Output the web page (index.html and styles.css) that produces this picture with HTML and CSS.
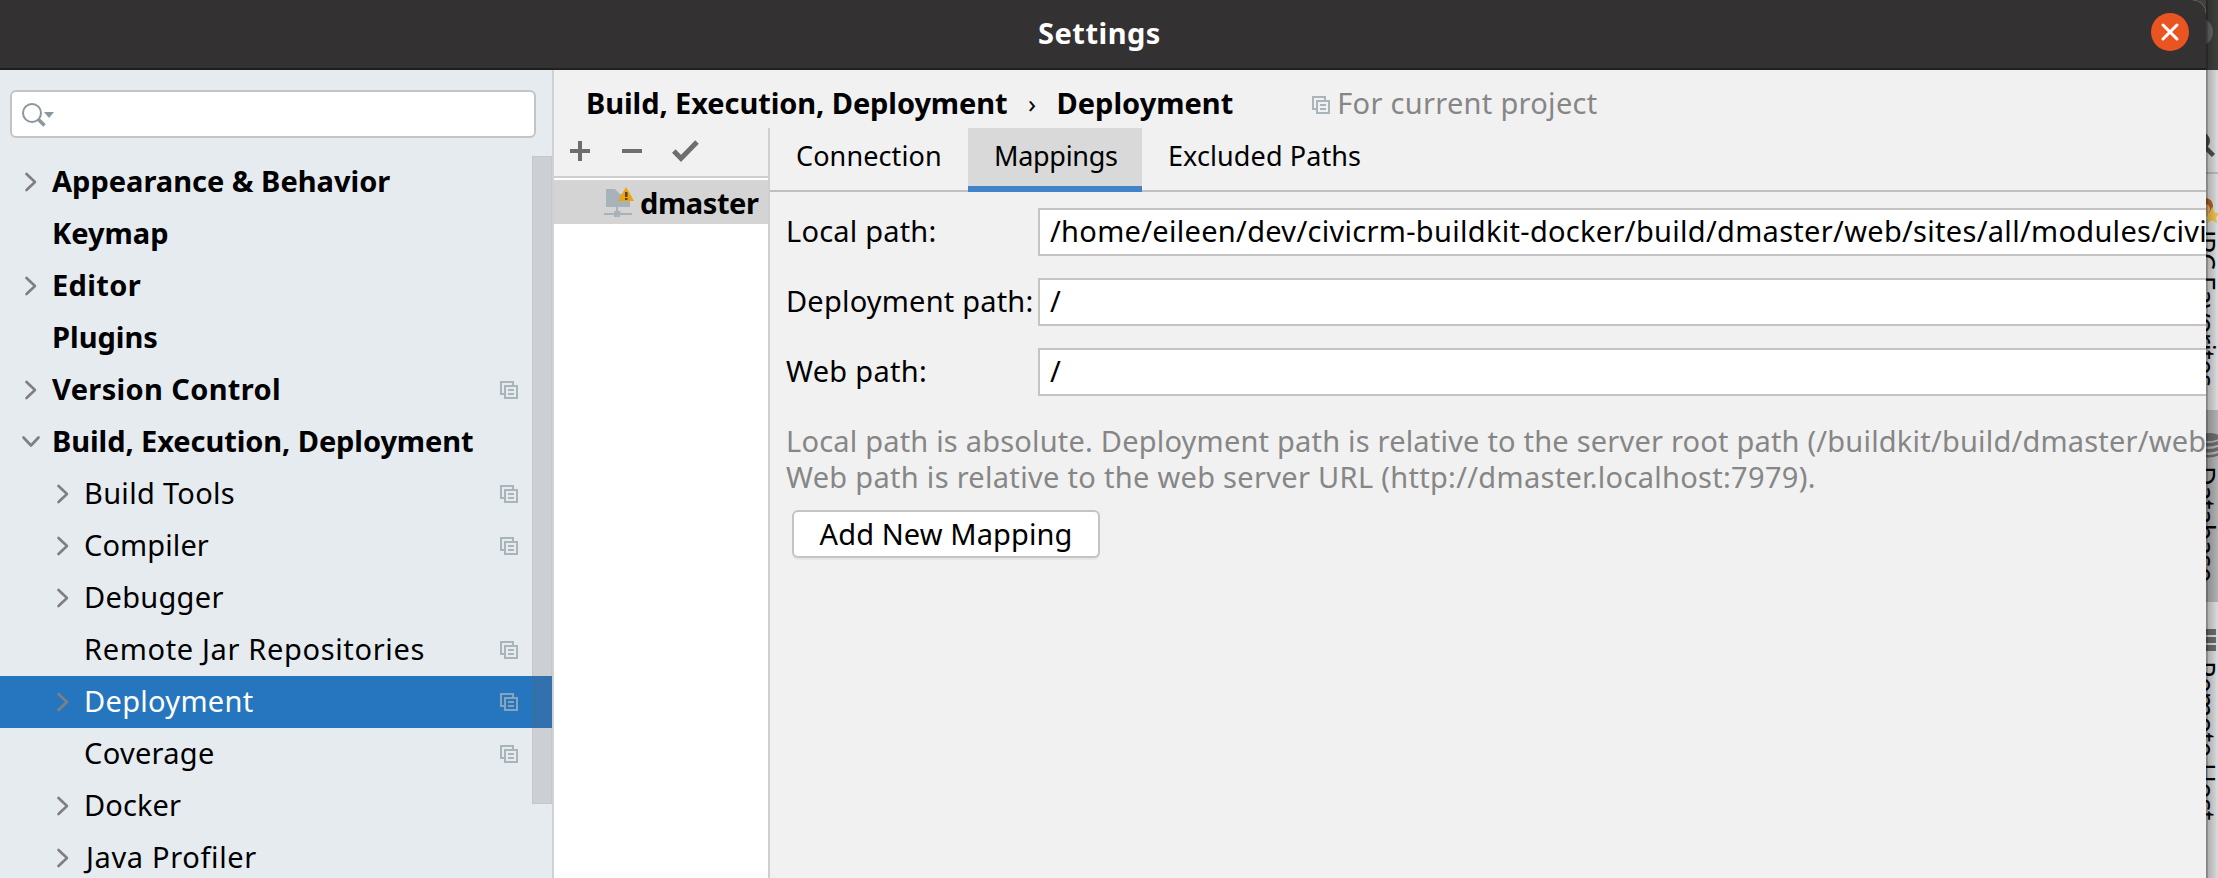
FILE: index.html
```html
<!DOCTYPE html>
<html lang="en">
<head>
<meta charset="utf-8">
<title>Settings</title>
<link rel="stylesheet" href="styles.css">
</head>
<body>
<svg class="defs" aria-hidden="true">
  <symbol id="right" viewBox="0 0 18 20"><path d="M4.500 2l8.500 8-8.500 8" fill="none" stroke="#7f7f7f" stroke-width="2.600" stroke-linecap="round" stroke-linejoin="round"/></symbol>
  <symbol id="down" viewBox="0 0 18 20"><path d="M1.500 5.500L9 13.500l7.500-8" fill="none" stroke="#7f7f7f" stroke-width="2.600" stroke-linecap="round" stroke-linejoin="round"/></symbol>
  <symbol id="copy" viewBox="0 0 18 18"><path d="M4 13H1V1h12v3M5 5h12v12H5zM8 9h6M8 13h6" fill="none" stroke="#a9b4bb" stroke-width="2"/></symbol>
</svg>
<div class="desktop">
  <aside class="strip">
    <div class="strip-top"><i class="ghost"></i></div>
    <div class="strip-find"><svg width="12" height="102" viewBox="0 0 12 102"><circle cx="-5" cy="71" r="7" fill="none" stroke="#4e4e4e" stroke-width="4"/><path d="M-2 76L7.500 85.500" stroke="#4e4e4e" stroke-width="4.500"/></svg></div>
    <div class="tool favorites"><svg width="12" height="28" viewBox="0 0 12 28"><circle cx="-1" cy="10" r="8" fill="#b5651d"/><circle cx="-1" cy="13" r="5" fill="#e9b98a"/><path d="M6 11l2.400 5.500 6 .7-4.500 4 1.200 6-5.100-3-5.100 3 1.200-6-4.500-4 6-.7z" fill="#f2c44d"/></svg><span>JPC Favorites</span></div>
    <div class="tool database"><svg width="12" height="28" viewBox="0 0 12 28"><g fill="#6e6e6e"><ellipse cx="3" cy="5" rx="11" ry="4"/><path d="M-8 8q11 6 22 0v4q-11 5-22 0zM-8 14q11 6 22 0v4q-11 5-22 0zM-8 20q11 6 22 0v3q-11 5-22 0z"/></g></svg><span>Database</span></div>
    <div class="tool remote"><svg width="12" height="24" viewBox="0 0 12 24"><path d="M0 0h10v6H0zM0 8h10v6H0zM0 16h10v6H0z" fill="#6e6e6e"/></svg><span>Remote Host</span></div>
  </aside>
  <main class="dialog">
    <header class="titlebar">
      <h1>Settings</h1>
      <button class="close" aria-label="Close"><svg width="38" height="38" viewBox="0 0 38 38"><path d="M12 12l14 14M26 12L12 26" stroke="#fff" stroke-width="3" stroke-linecap="round"/></svg></button>
    </header>
    <div class="body">
      <nav class="sidebar">
        <div class="search"><svg width="34" height="26" viewBox="0 0 34 26"><circle cx="10" cy="11" r="9" fill="none" stroke="#8a979f" stroke-width="2"/><path d="M16.500 17.500l6 6" stroke="#8a979f" stroke-width="3.500"/><path d="M22 10h10l-5 6z" fill="#8a979f"/></svg></div>
        <div class="tree">
          <ul>
            <li class="top"><svg class="arrow"><use href="#right"/></svg><span>Appearance &amp; Behavior</span></li>
            <li class="top"><i class="arrow"></i><span>Keymap</span></li>
            <li class="top"><svg class="arrow"><use href="#right"/></svg><span class="w3">Editor</span></li>
            <li class="top"><i class="arrow"></i><span>Plugins</span></li>
            <li class="top"><svg class="arrow"><use href="#right"/></svg><span class="w3">Version Control</span><svg class="copy"><use href="#copy"/></svg></li>
            <li class="top"><svg class="arrow"><use href="#down"/></svg><span class="n1">Build, Execution, Deployment</span></li>
            <li><svg class="arrow"><use href="#right"/></svg><span>Build Tools</span><svg class="copy"><use href="#copy"/></svg></li>
            <li><svg class="arrow"><use href="#right"/></svg><span class="w1">Compiler</span><svg class="copy"><use href="#copy"/></svg></li>
            <li><svg class="arrow"><use href="#right"/></svg><span>Debugger</span></li>
            <li><i class="arrow"></i><span class="w6">Remote Jar Repositories</span><svg class="copy"><use href="#copy"/></svg></li>
            <li class="selected"><svg class="arrow"><use href="#right"/></svg><span>Deployment</span><svg class="copy"><use href="#copy"/></svg></li>
            <li><i class="arrow"></i><span>Coverage</span><svg class="copy"><use href="#copy"/></svg></li>
            <li><svg class="arrow"><use href="#right"/></svg><span class="w1">Docker</span></li>
            <li><svg class="arrow"><use href="#right"/></svg><span class="w6 java">Java Profiler</span></li>
          </ul>
          <div class="scrollbar"></div>
        </div>
      </nav>
      <section class="page">
        <div class="crumbs"><b class="n1">Build, Execution, Deployment</b><span class="sep">›</span><b>Deployment</b><svg class="copy"><use href="#copy"/></svg><span class="scope">For current project</span></div>
        <div class="columns">
          <div class="servers">
            <div class="toolbar">
              <svg width="20" height="20" viewBox="0 0 20 20"><path d="M0 10h20M10 0v20" stroke="#6e6e6e" stroke-width="4"/></svg>
              <svg width="20" height="20" viewBox="0 0 20 20"><path d="M0 10h20" stroke="#6e6e6e" stroke-width="4"/></svg>
              <svg width="27" height="24" viewBox="0 0 27 24"><path d="M1.800 12l7.200 7.500L25 3" fill="none" stroke="#6e6e6e" stroke-width="5"/></svg>
            </div>
            <div class="server"><svg width="32" height="32" viewBox="0 0 32 32"><path d="M2 3h9l5 5h10v13H2z" fill="#a7b2b9"/><path d="M12 21h2v4h2.500v2H28v2H16v2h-6v-2H0v-2h10v-2h2z" fill="#a7b2b9"/><path d="M22 1l8 14H14z" fill="#efa30b"/><path d="M21 6h2.500v5H21zM21 12h2.500v2H21z" fill="#5a4320"/></svg><b>dmaster</b></div>
          </div>
          <div class="detail">
            <div class="tabs"><span class="tab">Connection</span><span class="tab active">Mappings</span><span class="tab">Excluded Paths</span></div>
            <div class="form">
              <label class="w2">Local path:</label><div class="field">/home/eileen/dev/civicrm-buildkit-docker/build/dmaster/web/sites/all/modules/civicrm</div>
              <label class="w2">Deployment path:</label><div class="field">/</div>
              <label>Web path:</label><div class="field">/</div>
            </div>
            <p class="help"><span class="w2">Local path is absolute. Deployment path is relative to the server root path (/buildkit/build/dmaster/web/).</span><br>Web path is relative to the web server URL (http://dmaster.localhost:7979).</p>
            <button class="add">Add New Mapping</button>
          </div>
        </div>
      </section>
    </div>
  </main>
</div>
</body>
</html>
```
FILE: styles.css
```css
* { box-sizing: border-box; }
body { margin: 0; background: #dcdcdc; font: 29px/36px "Noto Sans", "Open Sans", sans-serif; color: #000; letter-spacing: .3px; white-space: nowrap; overflow: hidden; }
b, .top { font-weight: 700; letter-spacing: 0; }
svg { display: block; flex: none; }
button { font: inherit; letter-spacing: inherit; color: inherit; }
.defs { position: absolute; width: 0; height: 0; }
.n1 { letter-spacing: -.08px; }
.w1 { letter-spacing: .1px; }
.w2 { letter-spacing: .2px; }
.w3 { letter-spacing: .36px; }
.w6 { letter-spacing: .65px; }

.desktop { position: relative; width: 2218px; height: 878px; overflow: hidden; }
.dialog { width: 2206px; height: 878px; display: flex; flex-direction: column; position: relative; overflow: hidden; background: #f1f1f1; border-top-right-radius: 14px; }

.titlebar { flex: none; height: 70px; display: flex; justify-content: flex-end; align-items: center; padding: 0 17px 4px 0; background: #333132; border-bottom: 2px solid #201e1f; color: #fff; }
.titlebar h1 { flex: 1; margin: 0; padding: 2px 0 0 1038px; font-size: 29px; line-height: 36px; font-weight: 700; letter-spacing: .5px; }
.close { width: 38px; height: 38px; padding: 0; border: 0; border-radius: 50%; background: #e95420; }

.body { flex: 1; min-height: 0; display: flex; }
.sidebar { flex: none; width: 554px; display: flex; flex-direction: column; background: #e6ebef; border-right: 2px solid #d0d1d2; }
.search { flex: none; height: 48px; margin: 20px 16px 18px 10px; padding: 10px; background: #fff; border: 2px solid #c4c4c4; border-radius: 6px; }
.tree { flex: 1; min-height: 0; position: relative; overflow: hidden; }
ul { margin: 0; padding: 0; list-style: none; }
li { height: 52px; display: flex; align-items: center; padding: 0 34px 0 54px; }
li span { flex: 1; padding-bottom: 2px; }
.arrow { flex: none; width: 18px; height: 20px; margin-right: 12px; }
li.top { padding-left: 22px; }
.java { text-indent: 2px; }
.copy { width: 18px; height: 18px; }
.selected { background: #2675bf; color: #fff; }
.selected .copy { opacity: .75; }
.scrollbar { position: absolute; top: 0; right: 0; width: 20px; height: 648px; background: rgba(100, 100, 110, .2); border: 1px solid rgba(100, 100, 110, .08); }

.page { flex: 1; min-width: 0; display: flex; flex-direction: column; }
.crumbs { flex: none; height: 58px; display: flex; align-items: center; padding: 0 0 0 32px; }
.crumbs b, .crumbs span { margin-top: 7px; }
.crumbs .sep { width: 49px; text-align: center; font-size: 26px; }
.crumbs .copy { margin: 11px 7px 0 79px; }
.scope { color: #868686; }
.columns { flex: 1; min-height: 0; display: flex; }
.servers { flex: none; width: 216px; background: #fff; border-right: 2px solid #cfcfcf; }
.toolbar { height: 50px; display: flex; align-items: center; padding: 0 0 2px 16px; background: #f1f1f1; border-bottom: 2px solid #cfcfcf; }
.toolbar svg { margin-right: 32px; }
.toolbar svg:nth-child(2) { margin-right: 30px; }
.server { height: 44px; margin-top: 2px; padding: 0 0 0 50px; display: flex; align-items: center; gap: 4px; background: #d4d4d4; }
.server b { padding-top: 1px; letter-spacing: -.4px; }

.detail { flex: 1; min-width: 0; overflow: hidden; }
.tabs { height: 64px; display: flex; font-size: 27px; box-shadow: inset 0 -2px #c0c0c0; letter-spacing: .1px; }
.tab { padding: 10px 26px 0; }
.tab:first-child { width: 198px; }
.tab.active { width: 174px; background: #d9d9d9; border-bottom: 6px solid #4083c9; letter-spacing: -.3px; }
.form { display: grid; grid-template-columns: 252px 1300px; row-gap: 22px; padding: 16px 0 0 16px; }
.form label { line-height: 46px; }
.field { height: 48px; padding: 0 10px; line-height: 42px; background: #fff; border: 2px solid #c4c4c4; }
.help { margin: 27px 0 0 16px; color: #868686; }
.add { display: block; width: 308px; height: 48px; margin: 15px 0 0 22px; padding: 0; line-height: 42px; letter-spacing: .1px; background: #fff; border: 2px solid #c4c4c4; border-radius: 6px; box-shadow: 0 2px 0 #e6e6e6; }

.strip { position: absolute; right: 0; top: 0; width: 26px; height: 878px; padding-left: 14px; background: #e0e0e0; }
.strip::after { content: ""; position: absolute; left: 14px; top: 0; width: 12px; height: 878px; background: linear-gradient(90deg, rgba(0, 0, 0, .42) 0, rgba(0, 0, 0, .36) 2px, rgba(0, 0, 0, .22) 2px, rgba(0, 0, 0, .02) 12px); }
.strip-top { height: 70px; margin-left: -14px; background: #40403d; padding: 18px 0 0; overflow: hidden; }
.ghost { display: block; width: 28px; height: 28px; margin-left: -7px; border-radius: 50%; background: #686868; }
.strip-find { height: 104px; border-bottom: 2px solid #bdbdbd; }
.tool { overflow: hidden; }
.tool span { display: block; writing-mode: vertical-rl; width: 36px; margin-left: -19px; font-size: 27px; line-height: 36px; letter-spacing: -.5px; }
.favorites { height: 236px; padding-top: 22px; }
.favorites span { margin-top: 6px; }
.database { height: 192px; padding-top: 22px; background: #b5b5b5; }
.database span { margin-top: 6px; }
.remote { padding-top: 27px; }
.remote span { margin-top: 8px; }
```
